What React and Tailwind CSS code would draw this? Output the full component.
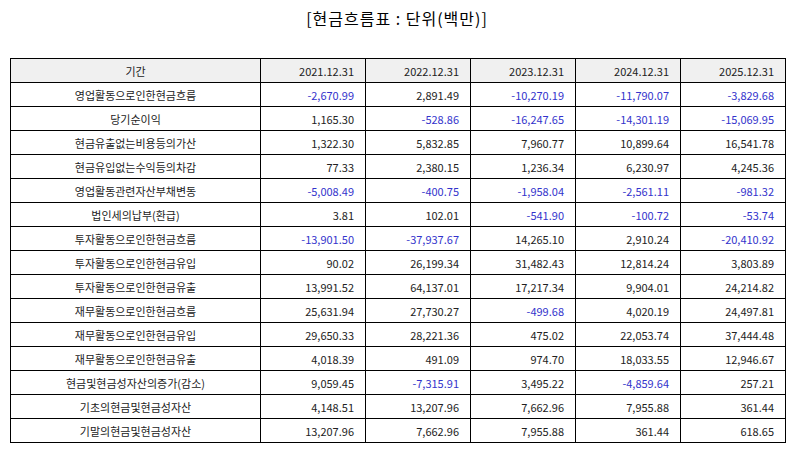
import React from "react";

const years = ["2021.12.31", "2022.12.31", "2023.12.31", "2024.12.31", "2025.12.31"];

const rows = [
  ["영업활동으로인한현금흐름", "-2,670.99", "2,891.49", "-10,270.19", "-11,790.07", "-3,829.68"],
  ["당기순이익", "1,165.30", "-528.86", "-16,247.65", "-14,301.19", "-15,069.95"],
  ["현금유출없는비용등의가산", "1,322.30", "5,832.85", "7,960.77", "10,899.64", "16,541.78"],
  ["현금유입없는수익등의차감", "77.33", "2,380.15", "1,236.34", "6,230.97", "4,245.36"],
  ["영업활동관련자산부채변동", "-5,008.49", "-400.75", "-1,958.04", "-2,561.11", "-981.32"],
  ["법인세의납부(환급)", "3.81", "102.01", "-541.90", "-100.72", "-53.74"],
  ["투자활동으로인한현금흐름", "-13,901.50", "-37,937.67", "14,265.10", "2,910.24", "-20,410.92"],
  ["투자활동으로인한현금유입", "90.02", "26,199.34", "31,482.43", "12,814.24", "3,803.89"],
  ["투자활동으로인한현금유출", "13,991.52", "64,137.01", "17,217.34", "9,904.01", "24,214.82"],
  ["재무활동으로인한현금흐름", "25,631.94", "27,730.27", "-499.68", "4,020.19", "24,497.81"],
  ["재무활동으로인한현금유입", "29,650.33", "28,221.36", "475.02", "22,053.74", "37,444.48"],
  ["재무활동으로인한현금유출", "4,018.39", "491.09", "974.70", "18,033.55", "12,946.67"],
  ["현금및현금성자산의증가(감소)", "9,059.45", "-7,315.91", "3,495.22", "-4,859.64", "257.21"],
  ["기초의현금및현금성자산", "4,148.51", "13,207.96", "7,662.96", "7,955.88", "361.44"],
  ["기말의현금및현금성자산", "13,207.96", "7,662.96", "7,955.88", "361.44", "618.65"],
];

export default function App() {
  return (
    <div
      className="w-[794px] h-[452px] bg-white text-[#222]"
      style={{ fontFamily: '"Noto Sans CJK KR", "Noto Sans", sans-serif' }}
    >
      <div className="h-[58px] pt-[5px] text-center text-[16px] tracking-[1px] leading-[26px] text-black">
        [현금흐름표 : 단위(백만)]
      </div>
      <table className="ml-[10px] w-[776px] border-collapse table-fixed text-[11px]">
        <colgroup>
          <col className="w-[250px]" />
          <col className="w-[105px]" />
          <col className="w-[105px]" />
          <col className="w-[105px]" />
          <col className="w-[105px]" />
          <col className="w-[105px]" />
        </colgroup>
        <thead>
          <tr className="h-[24px] bg-[#f0f0f0]">
            <th className="border border-black font-normal text-center p-0 leading-[22px]">기간</th>
            {years.map((y) => (
              <th key={y} className="border border-black font-normal text-right pr-[11px] p-0 leading-[22px]">
                {y}
              </th>
            ))}
          </tr>
        </thead>
        <tbody>
          {rows.map((r) => (
            <tr key={r[0]} className="h-[24px]">
              <td className="border border-black text-center p-0 leading-[22px]">{r[0]}</td>
              {r.slice(1).map((v, i) => (
                <td
                  key={i}
                  className={
                    "border border-black text-right pr-[11px] p-0 leading-[22px] " +
                    (v.startsWith("-") ? "text-[#3333cc]" : "")
                  }
                >
                  {v}
                </td>
              ))}
            </tr>
          ))}
        </tbody>
      </table>
    </div>
  );
}
